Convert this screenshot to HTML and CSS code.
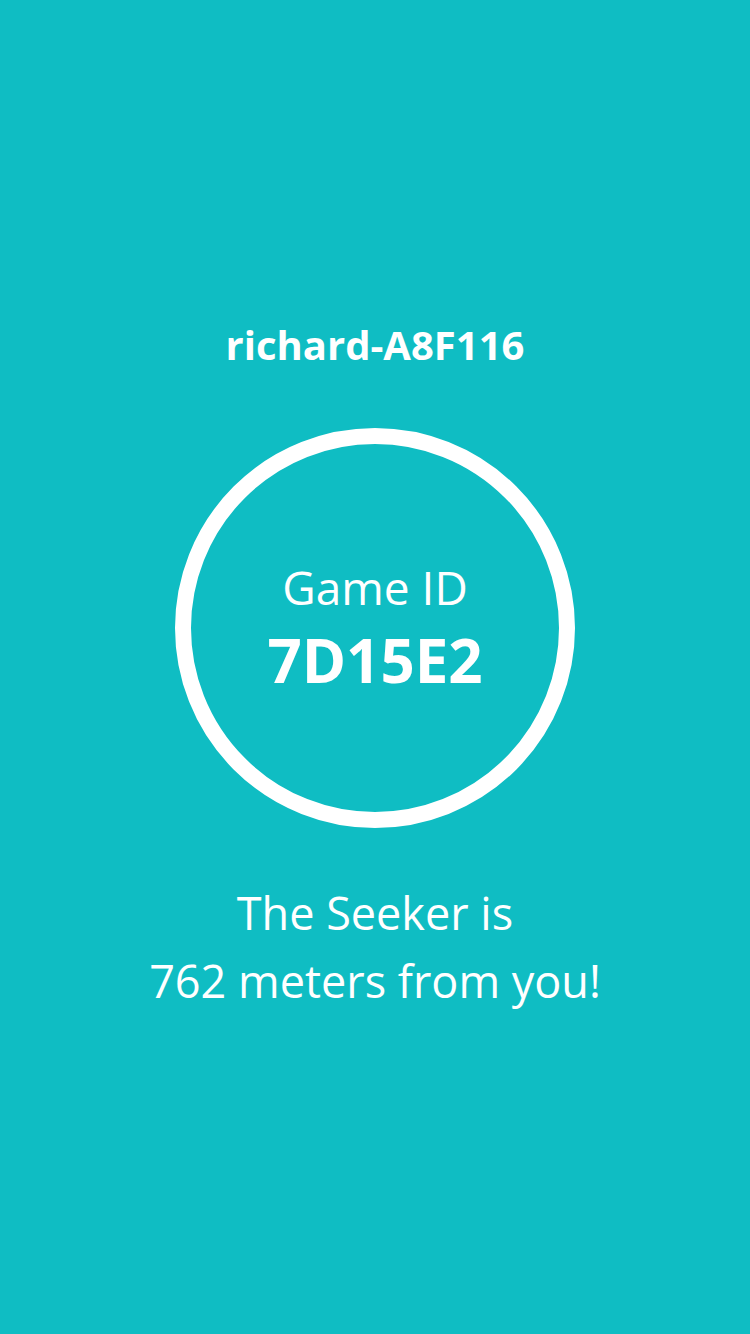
FILE: index.html
```html
<!DOCTYPE html>
<html>
<head>
<meta charset="utf-8">
<link rel="stylesheet" href="styles.css">
</head>
<body>
<main class="screen">
  <h1 class="player">richard-A8F116</h1>
  <div class="ring">
    <div class="ring-label">Game ID</div>
    <div class="ring-id">7D15E2</div>
  </div>
  <p class="status">The Seeker is<br>762 meters from you!</p>
</main>
</body>
</html>
```
FILE: styles.css
```css
html, body {
  margin: 0;
  padding: 0;
  background: #0fbdc3;
}
body {
  font-family: "Open Sans", "Noto Sans", sans-serif;
  color: #ffffff;
}
.screen {
  width: 750px;
  height: 1334px;
  display: flex;
  flex-direction: column;
  align-items: center;
  padding-top: 317px;
  box-sizing: border-box;
}
.player {
  margin: 0;
  font-size: 40px;
  font-weight: 700;
  line-height: normal;
}
.ring {
  margin-top: 56px;
  width: 400px;
  height: 400px;
  border: 16px solid #ffffff;
  border-radius: 50%;
  box-sizing: border-box;
  display: flex;
  flex-direction: column;
  align-items: center;
  justify-content: center;
}
.ring-label {
  font-size: 46px;
  font-weight: 400;
  line-height: normal;
}
.ring-id {
  margin-top: 1px;
  font-size: 60px;
  font-weight: 700;
  line-height: normal;
}
.status {
  margin: 51px 0 0;
  font-size: 45px;
  line-height: 68px;
  text-align: center;
}
```
